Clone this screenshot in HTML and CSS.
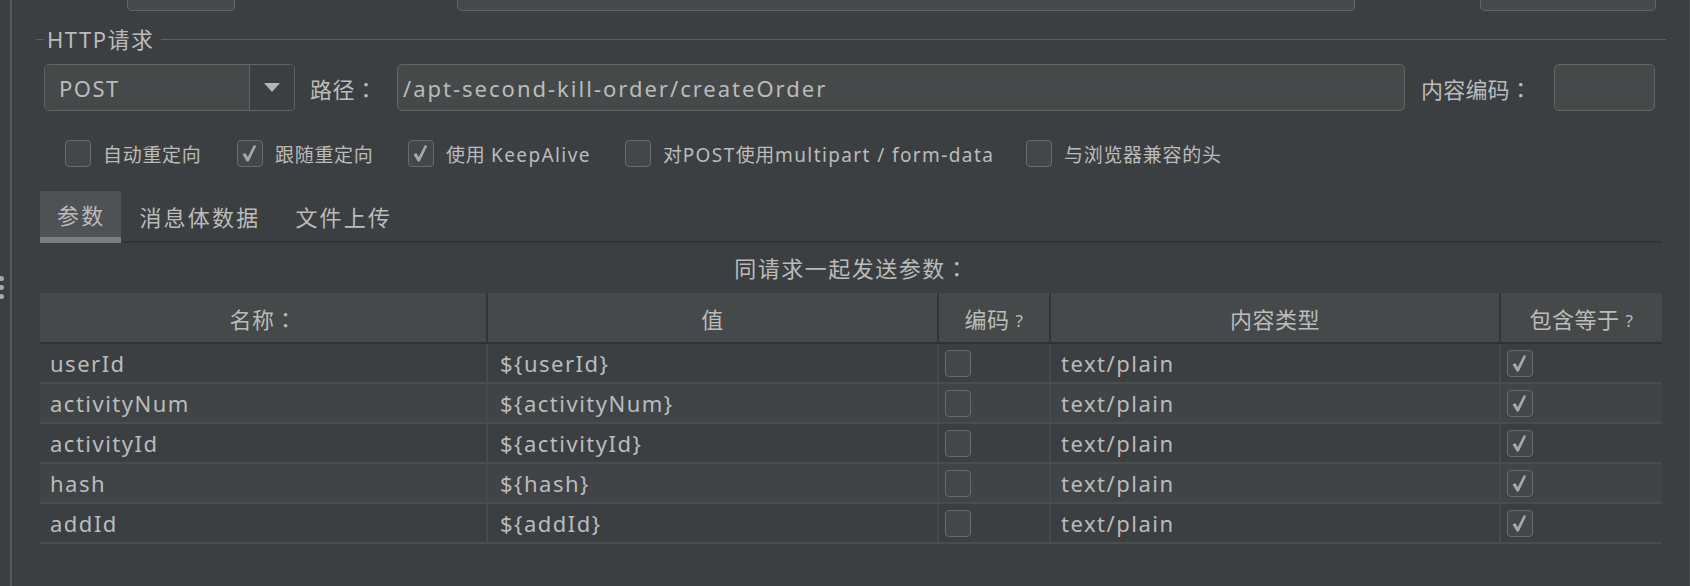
FILE: index.html
```html
<!DOCTYPE html>
<html lang="zh-CN">
<head>
<meta charset="utf-8">
<title>HTTP请求</title>
<link rel="stylesheet" href="styles.css">
</head>
<body>
<div class="frame">
  <div class="grip"><span></span><span></span><span></span></div>
  <div class="main">
    <div class="stubs">
      <div class="stub stub1"></div>
      <div class="stub stub2"></div>
      <div class="stub stub3"></div>
    </div>

    <div class="legend">
      <span class="legend-lead"></span>
      <span class="legend-text">HTTP请求</span>
      <span class="legend-line"></span>
    </div>

    <div class="req">
      <div class="combo">
        <div class="combo-text">POST</div>
        <div class="combo-btn">
          <svg width="16" height="9" viewBox="0 0 16 9"><path d="M0 0 H16 L8 9 Z" fill="#b4b4b4"/></svg>
        </div>
      </div>
      <div class="lbl-path">路径<span class="colon" lang="zh-TW">：</span></div>
      <div class="field path">/apt-second-kill-order/createOrder</div>
      <div class="lbl-enc">内容编码<span class="colon" lang="zh-TW">：</span></div>
      <div class="field enc"></div>
    </div>

    <div class="checks">
      <div class="chk w1"><span class="box"></span><span class="chk-lbl">自动重定向</span></div>
      <div class="chk w2"><span class="box"><svg class="tick" viewBox="0 0 25 27"><path d="M5.6 14.6 L8.2 12.9 L10.8 17.1 L16.9 4.9 L19.2 6.1 L11.7 21.6 L9.8 21.6 Z" fill="#a6a6a6"/></svg></span><span class="chk-lbl">跟随重定向</span></div>
      <div class="chk w3"><span class="box"><svg class="tick" viewBox="0 0 25 27"><path d="M5.6 14.6 L8.2 12.9 L10.8 17.1 L16.9 4.9 L19.2 6.1 L11.7 21.6 L9.8 21.6 Z" fill="#a6a6a6"/></svg></span><span class="chk-lbl">使用 <span class="lat">KeepAlive</span></span></div>
      <div class="chk w4"><span class="box"></span><span class="chk-lbl">对<span class="lat">POST</span>使用<span class="lat">multipart / form-data</span></span></div>
      <div class="chk"><span class="box"></span><span class="chk-lbl">与浏览器兼容的头</span></div>
    </div>

    <div class="tabs">
      <div class="tab active">参数</div>
      <div class="tab">消息体数据</div>
      <div class="tab">文件上传</div>
      <div class="tab-fill"></div>
    </div>

    <div class="caption">同请求一起发送参数<span class="colon" lang="zh-TW">：</span></div>

    <div class="table">
      <div class="th">名称<span class="colon" lang="zh-TW">：</span></div>
      <div class="th">值</div>
      <div class="th">编码<span class="q">?</span></div>
      <div class="th">内容类型</div>
      <div class="th last">包含等于<span class="q">?</span></div>

      <div class="td c1">userId</div>
      <div class="td c2">${userId}</div>
      <div class="td c3"><span class="box"></span></div>
      <div class="td c4">text/plain</div>
      <div class="td c5 last"><span class="box"><svg class="tick" viewBox="0 0 25 27"><path d="M5.6 14.6 L8.2 12.9 L10.8 17.1 L16.9 4.9 L19.2 6.1 L11.7 21.6 L9.8 21.6 Z" fill="#a6a6a6"/></svg></span></div>

      <div class="td c1 alt">activityNum</div>
      <div class="td c2 alt">${activityNum}</div>
      <div class="td c3 alt"><span class="box"></span></div>
      <div class="td c4 alt">text/plain</div>
      <div class="td c5 alt last"><span class="box"><svg class="tick" viewBox="0 0 25 27"><path d="M5.6 14.6 L8.2 12.9 L10.8 17.1 L16.9 4.9 L19.2 6.1 L11.7 21.6 L9.8 21.6 Z" fill="#a6a6a6"/></svg></span></div>

      <div class="td c1">activityId</div>
      <div class="td c2">${activityId}</div>
      <div class="td c3"><span class="box"></span></div>
      <div class="td c4">text/plain</div>
      <div class="td c5 last"><span class="box"><svg class="tick" viewBox="0 0 25 27"><path d="M5.6 14.6 L8.2 12.9 L10.8 17.1 L16.9 4.9 L19.2 6.1 L11.7 21.6 L9.8 21.6 Z" fill="#a6a6a6"/></svg></span></div>

      <div class="td c1 alt">hash</div>
      <div class="td c2 alt">${hash}</div>
      <div class="td c3 alt"><span class="box"></span></div>
      <div class="td c4 alt">text/plain</div>
      <div class="td c5 alt last"><span class="box"><svg class="tick" viewBox="0 0 25 27"><path d="M5.6 14.6 L8.2 12.9 L10.8 17.1 L16.9 4.9 L19.2 6.1 L11.7 21.6 L9.8 21.6 Z" fill="#a6a6a6"/></svg></span></div>

      <div class="td c1">addId</div>
      <div class="td c2">${addId}</div>
      <div class="td c3"><span class="box"></span></div>
      <div class="td c4">text/plain</div>
      <div class="td c5 last"><span class="box"><svg class="tick" viewBox="0 0 25 27"><path d="M5.6 14.6 L8.2 12.9 L10.8 17.1 L16.9 4.9 L19.2 6.1 L11.7 21.6 L9.8 21.6 Z" fill="#a6a6a6"/></svg></span></div>
    </div>
  </div>
</div>
</body>
</html>
```

FILE: styles.css
```css
* { box-sizing: border-box; }

html, body {
  margin: 0;
  padding: 0;
}

body {
  width: 1690px;
  height: 586px;
  overflow: hidden;
  background: #3c3f41;
  color: #bbbbbb;
  font-family: "Noto Sans", "Noto Sans CJK SC", sans-serif;
  font-size: 22px;
  letter-spacing: 1.5px;
}

.colon {
  font-family: "Noto Sans CJK TC", "Noto Sans CJK SC", sans-serif;
  letter-spacing: 0;
}

.frame {
  position: relative;
  height: 586px;
  border-right: 1px solid #4a4d4f;
}

.grip {
  position: absolute;
  left: -1px;
  top: 276px;
  display: flex;
  flex-direction: column;
  gap: 4px;
}
.grip span {
  width: 5px;
  height: 5px;
  border-radius: 50%;
  background: #a8a8a8;
}

.main {
  margin-left: 10px;
  height: 100%;
  border-left: 2px solid #56595b;
  padding-left: 24px;
  padding-right: 23px;
}

/* cut-off fields at the very top */
.stubs {
  display: flex;
  height: 11px;
}
.stub {
  height: 11px;
  background: #45494a;
  border: 1.5px solid #646464;
  border-top: none;
  border-radius: 0 0 5px 5px;
}
.stub1 { margin-left: 91px; width: 108px; }
.stub2 { margin-left: 222px; width: 898px; }
.stub3 { margin-left: 125px; width: 176px; }

/* titled border */
.legend {
  display: flex;
  align-items: center;
  height: 28px;
  margin-top: 14px;
}
.legend-lead {
  width: 8px;
  height: 1px;
  background: #5c5f61;
}
.legend-text {
  padding: 0 6px 0 3px;
  line-height: 28px;
}
.legend-line {
  flex: 1;
  height: 1px;
  background: #5c5f61;
}

/* method / path row */
.req {
  display: flex;
  align-items: center;
  height: 47px;
  margin-top: 11px;
  padding-left: 8px;
  padding-right: 11px;
}
.combo {
  display: flex;
  width: 251px;
  height: 47px;
  border: 1.5px solid #646464;
  border-radius: 5px;
  overflow: hidden;
}
.combo-text {
  flex: 1;
  background: #45494a;
  padding-left: 14px;
  display: flex;
  align-items: center;
}
.combo-btn {
  width: 45px;
  border-left: 1.5px solid #646464;
  background: #3c3f41;
  display: flex;
  align-items: center;
  justify-content: center;
}
.lbl-path {
  margin-left: 15px;
  width: 87px;
  letter-spacing: 0.5px;
}
.field {
  height: 47px;
  background: #45494a;
  border: 1.5px solid #646464;
  border-radius: 5px;
  display: flex;
  align-items: center;
}
.path {
  flex: 1;
  padding-left: 5px;
  letter-spacing: 2px;
}
.lbl-enc {
  margin-left: 16px;
  width: 133px;
  letter-spacing: 0.2px;
}
.enc { width: 101px; }

/* checkbox row */
.checks {
  display: flex;
  align-items: center;
  height: 27px;
  margin-top: 29px;
  padding-left: 29px;
}
.chk {
  display: flex;
  align-items: center;
  gap: 12px;
  flex-shrink: 0;
}
.w1 { width: 172px; }
.w2 { width: 171px; }
.w3 { width: 217px; }
.w4 { width: 401px; }
.chk-lbl {
  font-size: 19px;
  letter-spacing: 0.7px;
  white-space: nowrap;
}
.lat { letter-spacing: 1.4px; }

.box {
  display: inline-block;
  position: relative;
  width: 26px;
  height: 27px;
  flex-shrink: 0;
  background: #43474a;
  border: 1.5px solid #6a6a6a;
  border-radius: 4px;
}
.tick {
  position: absolute;
  left: -1px;
  top: -1px;
  width: 25px;
  height: 27px;
}

/* tabs */
.tabs {
  display: flex;
  margin-top: 24px;
  margin-left: 4px;
  margin-right: 4px;
  letter-spacing: 2.2px;
}
.tab {
  height: 52px;
  padding: 0 17px 0 18px;
  display: flex;
  align-items: center;
  border-bottom: 2px solid #313335;
}
.tab.active {
  background: #4e5254;
  border-bottom: 6px solid #787d82;
  padding: 0 16px 0 17px;
}
.tab-fill {
  flex: 1;
  height: 52px;
  border-bottom: 2px solid #313335;
}

.caption {
  height: 50px;
  line-height: 48px;
  text-align: center;
  margin: 0 4px;
}

/* params table */
.table {
  display: grid;
  grid-template-columns: 448px 451px 112px 450px 161px;
  margin: 0 4px;
}
.th {
  height: 51px;
  background: #45494a;
  border-bottom: 2px solid #2f3234;
  border-right: 2px solid #323537;
  display: flex;
  align-items: center;
  justify-content: center;
  letter-spacing: 0.5px;
}
.th.last { border-right: none; }
.q {
  font-size: 17px;
  margin-left: 6px;
  margin-top: 6px;
}
.td {
  height: 40px;
  border-bottom: 2px solid #4a4d4f;
  border-right: 2px solid #484b4d;
  display: flex;
  align-items: center;
  white-space: nowrap;
}
.td.last { border-right: none; }
.td.alt { background: #414446; }
.c1 { padding-left: 10px; }
.c2 { padding-left: 12px; }
.c3 { padding-left: 6px; }
.c4 { padding-left: 10px; }
.c5 { padding-left: 6px; }
```
